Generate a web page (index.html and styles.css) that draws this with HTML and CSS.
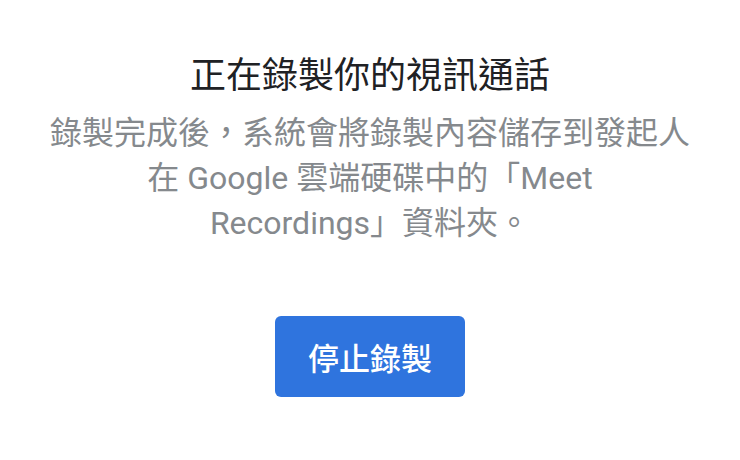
FILE: index.html
```html
<!DOCTYPE html>
<html lang="zh-Hant">
<head>
  <meta charset="UTF-8">
  <meta name="viewport" content="width=device-width, initial-scale=1.0">
  <title>正在錄製你的視訊通話</title>
  <link rel="stylesheet" href="styles.css">
</head>
<body>
  <!-- 錄製中的對話框 -->
  <div class="dialog">
    <h1 class="title">正在錄製你的視訊通話</h1>
    <p class="message">錄製完成後，系統會將錄製內容儲存到發起人<br>在 Google 雲端硬碟中的「Meet<br>Recordings」資料夾。</p>
    <button class="stop-button">停止錄製</button>
  </div>
</body>
</html>
```

FILE: styles.css
```css
body {
  margin: 0;
  background-color: #ffffff;
  font-family: Roboto, "Noto Sans CJK SC", sans-serif;
}

.dialog {
  display: flex;
  flex-direction: column;
  align-items: center;
  padding: 52px 40px 0;
  text-align: center;
}

.title {
  margin: 0;
  font-size: 36px;
  font-weight: 400;
  line-height: 48px;
  color: #202124;
}

.message {
  margin: 11px 0 0;
  font-size: 32px;
  line-height: 45px;
  color: #85898d;
}

.stop-button {
  margin-top: 70px;
  width: 190px;
  height: 81px;
  border: none;
  border-radius: 6px;
  background-color: #2f74de;
  color: #ffffff;
  font-family: inherit;
  font-size: 31px;
  font-weight: 500;
}
```
